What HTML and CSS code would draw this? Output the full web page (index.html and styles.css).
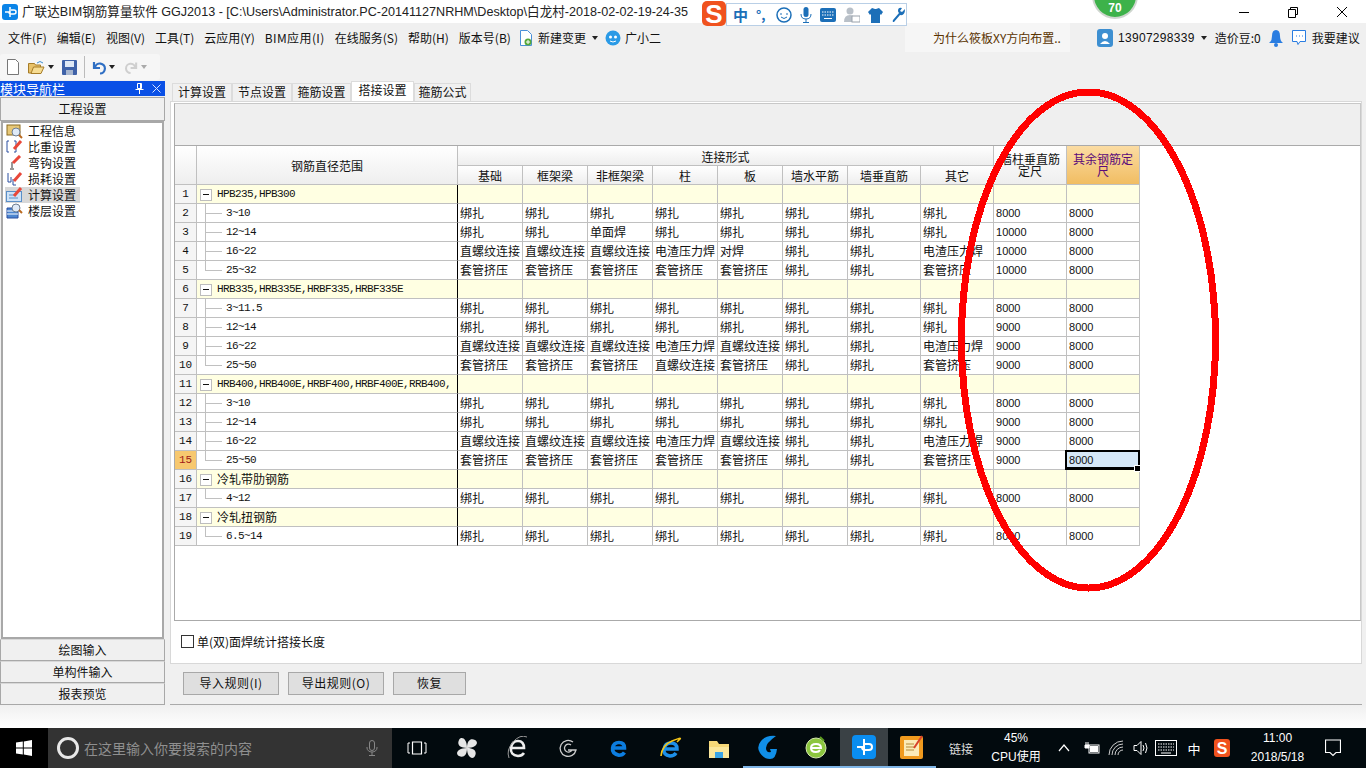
FILE: index.html
```html
<!DOCTYPE html>
<html lang="zh-CN">
<head>
<meta charset="utf-8">
<title>广联达BIM钢筋算量软件 GGJ2013</title>
<link rel="stylesheet" href="styles.css">
</head>
<body>
<div class="titlebar">
  <svg class="app-logo" width="16" height="16" viewBox="0 0 16 16"><rect width="16" height="16" rx="3" fill="#0a84e8"/><path d="M8 3v10M3 8h4a2 2 0 0 0 2 2h3a1.500 1.500 0 0 0 0-4H9" fill="none" stroke="#fff" stroke-width="1.500"/></svg>
  <span class="title-text">广联达BIM钢筋算量软件 GGJ2013 - [C:\Users\Administrator.PC-20141127NRHM\Desktop\白龙村-2018-02-02-19-24-35</span>
  <div class="win-controls">
    <svg width="12" height="12" viewBox="0 0 12 12"><path d="M1 6.500h10" stroke="#000"/></svg>
    <svg width="12" height="12" viewBox="0 0 12 12"><path d="M1.500 3.500h7v8h-7zM3.500 3V1.500h7v7H9" fill="none" stroke="#000"/></svg>
    <svg width="12" height="12" viewBox="0 0 12 12"><path d="M1 1l10 10M11 1L1 11" stroke="#000"/></svg>
  </div>
</div>
<div class="menubar">
  <nav class="menu">
    <span>文件(F)</span><span>编辑(E)</span><span>视图(V)</span><span>工具(T)</span><span>云应用(Y)</span><span class="wide">BIM应用(I)</span><span>在线服务(S)</span><span>帮助(H)</span><span>版本号(B)</span>
  </nav>
  <div class="menu-extra">
    <svg width="14" height="18" viewBox="0 0 14 18"><path d="M1.500 1.500h7l4 4v11h-11z" fill="#fff" stroke="#4a90d9"/><circle cx="9" cy="13" r="3.500" fill="#58a83a"/><path d="M7 13h4M9 11v4" stroke="#fff"/></svg>
    <span>新建变更</span><i class="caret"></i>
    <svg class="guang" width="16" height="18" viewBox="0 0 16 18"><circle cx="8" cy="9" r="7.500" fill="#2a9ae6"/><circle cx="5.500" cy="8" r="1.500" fill="#fff"/><circle cx="10.500" cy="8" r="1.500" fill="#fff"/><path d="M5 12q3 2 6 0" stroke="#fff" fill="none"/></svg>
    <span>广小二</span>
  </div>
  <div class="tip">为什么筱板XY方向布置..</div>
  <div class="account">
    <svg width="16" height="18" viewBox="0 0 16 18"><rect width="16" height="18" rx="3" fill="#3d8fd1"/><circle cx="8" cy="7" r="3" fill="#fff"/><path d="M3 15q5-6 10 0z" fill="#fff"/></svg>
    <span class="phone">13907298339</span><i class="caret"></i>
    <span class="beans">造价豆:0</span>
    <svg width="14" height="18" viewBox="0 0 14 18"><path d="M7 1q4 0 4 6 0 5 3 7H0q3-2 3-7 0-6 4-6z" fill="#2a7de1"/><circle cx="7" cy="16" r="2" fill="#2a7de1"/></svg>
    <svg class="chat" width="16" height="18" viewBox="0 0 16 18"><path d="M1.500 1.500h13v11H9l-2 3-1-3H1.500z" fill="#fff" stroke="#2a7de1"/><path d="M5 7h1M8 7h1M11 7h1" stroke="#2a7de1"/></svg>
    <span>我要建议</span>
  </div>
</div>
<div class="toolbar">
  <div class="tool-group">
    <svg class="t-new" width="14" height="16" viewBox="0 0 14 16"><path d="M1.500.5h8l3 3v12h-11z" fill="#fff" stroke="#777"/></svg>
    <svg class="t-open" width="17" height="15" viewBox="0 0 17 15"><path d="M.5 3.500h6l1 1.500h5v8H.5z" fill="#e8c26a" stroke="#a67c28"/><path d="M3 13.500L5.500 7H16l-3 6.500z" fill="#f6dc92" stroke="#a67c28"/><path d="M9 3q3-3 6 0" stroke="#3d8fd1" fill="none"/></svg>
    <i class="caret dark"></i>
    <svg class="t-save" width="15" height="15" viewBox="0 0 15 15"><rect width="15" height="15" rx="1" fill="#3f62a8"/><rect x="3" y="1" width="9" height="6" fill="#dfe8f5"/><rect x="4" y="10" width="7" height="5" fill="#a7b6cf"/></svg>
    <b class="tool-sep"></b>
    <svg class="t-undo" width="14" height="15" viewBox="0 0 14 15"><path d="M2 2v6h6M3 7.500a5 5 0 1 1 5 6" fill="none" stroke="#2f6fc4" stroke-width="2.200"/></svg>
    <i class="caret dark"></i>
    <svg class="t-redo" width="13" height="15" viewBox="0 0 14 15"><path d="M12 2v6H6M11 7.500a5 5 0 1 0-5 6" fill="none" stroke="#cfcfcf" stroke-width="2.200"/></svg>
    <i class="caret light"></i>
  </div>
</div>
<div class="workspace">
  <aside class="sidebar">
    <div class="nav-head"><span>模块导航栏</span>
      <svg class="pin" width="9" height="11" viewBox="0 0 9 11"><path d="M2.500.5h4v5h-4zM.5 6.500h8M4.500 7v4M5.500 1v4" fill="none" stroke="#fff"/></svg>
      <svg class="close" width="9" height="9" viewBox="0 0 9 9"><path d="M.5.500l8 8M8.500.500l-8 8" stroke="#d9e4ff"/></svg>
    </div>
    <div class="side-btn first">工程设置</div>
    <ul class="side-list">
      <li><svg width="17" height="16" viewBox="0 0 17 16"><rect x="1" y="2" width="13" height="10" fill="#e7c878" stroke="#8a6a20"/><circle cx="10" cy="9" r="4" fill="#dfeaf7" stroke="#6d7d92"/><path d="M13 12l3 3" stroke="#b96a20" stroke-width="2"/></svg>工程信息</li>
      <li><svg width="17" height="16" viewBox="0 0 17 16"><path d="M3 2H1v11h2M8 2h2v11H8" fill="none" stroke="#2a4fa0"/><path d="M8 10l7-8" stroke="#e8473a" stroke-width="3"/></svg>比重设置</li>
      <li><svg width="17" height="16" viewBox="0 0 17 16"><path d="M6 7v6M4 14h4" stroke="#333"/><path d="M7 8l7-7" stroke="#e8473a" stroke-width="3"/></svg>弯钩设置</li>
      <li><svg width="17" height="16" viewBox="0 0 17 16"><path d="M2 2v9h3V6M7 8v6h3" fill="none" stroke="#2a4fa0"/><path d="M8 10l7-8" stroke="#e8473a" stroke-width="3"/></svg>损耗设置</li>
      <li class="active"><svg width="17" height="16" viewBox="0 0 17 16"><rect x=".5" y="4.500" width="15" height="10" fill="#cfe3f7" stroke="#5a8fc8"/><path d="M3 8h6M3 11h9" stroke="#5a8fc8"/><path d="M8 9l7-8" stroke="#e8473a" stroke-width="3"/></svg>计算设置</li>
      <li><svg width="17" height="16" viewBox="0 0 17 16"><path d="M1 5h11v10H1z" fill="#4c86d0" stroke="#2a4fa0"/><path d="M1 8h11M1 11h11" stroke="#fff"/><circle cx="10" cy="5" r="4" fill="#dfeaf7" stroke="#6d7d92"/><path d="M13 7l3 3" stroke="#b96a20" stroke-width="2"/></svg>楼层设置</li>
    </ul>
    <div class="side-btn">绘图输入</div>
    <div class="side-btn">单构件输入</div>
    <div class="side-btn">报表预览</div>
  </aside>
  <main class="main">
    <div class="tabs">
      <span class="tab t1">计算设置</span><span class="tab t1">节点设置</span><span class="tab t2">箍筋设置</span><span class="tab t3 on">搭接设置</span><span class="tab t4">箍筋公式</span>
    </div>
    <section class="panel">
      <div class="box">
        <div class="strip"></div>
        <div class="grid-area">
          <table class="grid">
            <colgroup><col class="c0"><col class="c1"><col class="c2"><col class="c2"><col class="c2"><col class="c2"><col class="c2"><col class="c2"><col class="c3"><col class="c3"><col class="c3"><col class="c3"></colgroup>
            <thead>
              <tr class="h1"><th rowspan="2"></th><th rowspan="2">钢筋直径范围</th><th colspan="8">连接形式</th><th rowspan="2" class="wrap">墙柱垂直筋定尺</th><th rowspan="2" class="wrap hot">其余钢筋定尺</th></tr>
              <tr class="h2"><th>基础</th><th>框架梁</th><th>非框架梁</th><th>柱</th><th>板</th><th>墙水平筋</th><th>墙垂直筋</th><th>其它</th></tr>
            </thead>
            <tbody>
              <tr class="g"><td class="n">1</td><td class="r"><i class="box-minus"></i><span class="lat">HPB235,HPB300</span></td><td></td><td></td><td></td><td></td><td></td><td></td><td></td><td></td><td></td><td></td></tr>
              <tr><td class="n">2</td><td class="r leaf"><span class="lat">3~10</span></td><td>绑扎</td><td>绑扎</td><td>绑扎</td><td>绑扎</td><td>绑扎</td><td>绑扎</td><td>绑扎</td><td>绑扎</td><td class="num">8000</td><td class="num">8000</td></tr>
              <tr><td class="n">3</td><td class="r leaf"><span class="lat">12~14</span></td><td>绑扎</td><td>绑扎</td><td>单面焊</td><td>绑扎</td><td>绑扎</td><td>绑扎</td><td>绑扎</td><td>绑扎</td><td class="num">10000</td><td class="num">8000</td></tr>
              <tr><td class="n">4</td><td class="r leaf"><span class="lat">16~22</span></td><td>直螺纹连接</td><td>直螺纹连接</td><td>直螺纹连接</td><td>电渣压力焊</td><td>对焊</td><td>绑扎</td><td>绑扎</td><td>电渣压力焊</td><td class="num">10000</td><td class="num">8000</td></tr>
              <tr><td class="n">5</td><td class="r leaf last"><span class="lat">25~32</span></td><td>套管挤压</td><td>套管挤压</td><td>套管挤压</td><td>套管挤压</td><td>套管挤压</td><td>绑扎</td><td>绑扎</td><td>套管挤压</td><td class="num">10000</td><td class="num">8000</td></tr>
              <tr class="g"><td class="n">6</td><td class="r"><i class="box-minus"></i><span class="lat">HRB335,HRB335E,HRBF335,HRBF335E</span></td><td></td><td></td><td></td><td></td><td></td><td></td><td></td><td></td><td></td><td></td></tr>
              <tr><td class="n">7</td><td class="r leaf"><span class="lat">3~11.5</span></td><td>绑扎</td><td>绑扎</td><td>绑扎</td><td>绑扎</td><td>绑扎</td><td>绑扎</td><td>绑扎</td><td>绑扎</td><td class="num">8000</td><td class="num">8000</td></tr>
              <tr><td class="n">8</td><td class="r leaf"><span class="lat">12~14</span></td><td>绑扎</td><td>绑扎</td><td>绑扎</td><td>绑扎</td><td>绑扎</td><td>绑扎</td><td>绑扎</td><td>绑扎</td><td class="num">9000</td><td class="num">8000</td></tr>
              <tr><td class="n">9</td><td class="r leaf"><span class="lat">16~22</span></td><td>直螺纹连接</td><td>直螺纹连接</td><td>直螺纹连接</td><td>电渣压力焊</td><td>直螺纹连接</td><td>绑扎</td><td>绑扎</td><td>电渣压力焊</td><td class="num">9000</td><td class="num">8000</td></tr>
              <tr><td class="n">10</td><td class="r leaf last"><span class="lat">25~50</span></td><td>套管挤压</td><td>套管挤压</td><td>套管挤压</td><td>直螺纹连接</td><td>套管挤压</td><td>绑扎</td><td>绑扎</td><td>套管挤压</td><td class="num">9000</td><td class="num">8000</td></tr>
              <tr class="g"><td class="n">11</td><td class="r"><i class="box-minus"></i><span class="lat">HRB400,HRB400E,HRBF400,HRBF400E,RRB400,</span></td><td></td><td></td><td></td><td></td><td></td><td></td><td></td><td></td><td></td><td></td></tr>
              <tr><td class="n">12</td><td class="r leaf"><span class="lat">3~10</span></td><td>绑扎</td><td>绑扎</td><td>绑扎</td><td>绑扎</td><td>绑扎</td><td>绑扎</td><td>绑扎</td><td>绑扎</td><td class="num">8000</td><td class="num">8000</td></tr>
              <tr><td class="n">13</td><td class="r leaf"><span class="lat">12~14</span></td><td>绑扎</td><td>绑扎</td><td>绑扎</td><td>绑扎</td><td>绑扎</td><td>绑扎</td><td>绑扎</td><td>绑扎</td><td class="num">9000</td><td class="num">8000</td></tr>
              <tr><td class="n">14</td><td class="r leaf"><span class="lat">16~22</span></td><td>直螺纹连接</td><td>直螺纹连接</td><td>直螺纹连接</td><td>电渣压力焊</td><td>直螺纹连接</td><td>绑扎</td><td>绑扎</td><td>电渣压力焊</td><td class="num">9000</td><td class="num">8000</td></tr>
              <tr><td class="n cur">15</td><td class="r leaf last"><span class="lat">25~50</span></td><td>套管挤压</td><td>套管挤压</td><td>套管挤压</td><td>套管挤压</td><td>套管挤压</td><td>绑扎</td><td>绑扎</td><td>套管挤压</td><td class="num">9000</td><td class="num sel">8000</td></tr>
              <tr class="g"><td class="n">16</td><td class="r"><i class="box-minus"></i>冷轧带肋钢筋</td><td></td><td></td><td></td><td></td><td></td><td></td><td></td><td></td><td></td><td></td></tr>
              <tr><td class="n">17</td><td class="r leaf last"><span class="lat">4~12</span></td><td>绑扎</td><td>绑扎</td><td>绑扎</td><td>绑扎</td><td>绑扎</td><td>绑扎</td><td>绑扎</td><td>绑扎</td><td class="num">8000</td><td class="num">8000</td></tr>
              <tr class="g"><td class="n">18</td><td class="r"><i class="box-minus"></i>冷轧扭钢筋</td><td></td><td></td><td></td><td></td><td></td><td></td><td></td><td></td><td></td><td></td></tr>
              <tr><td class="n">19</td><td class="r leaf last"><span class="lat">6.5~14</span></td><td>绑扎</td><td>绑扎</td><td>绑扎</td><td>绑扎</td><td>绑扎</td><td>绑扎</td><td>绑扎</td><td>绑扎</td><td class="num">8000</td><td class="num">8000</td></tr>
            </tbody>
          </table>
        </div>
      </div>
      <label class="opt"><i class="check"></i>单(双)面焊统计搭接长度</label>
    </section>
    <div class="btnbar"><span class="btn w96">导入规则(I)</span><span class="btn w96">导出规则(O)</span><span class="btn w72">恢复</span></div>
  </main>
</div>
<div class="spacer"></div>
<footer class="taskbar">
  <div class="start"><svg width="16" height="16" viewBox="0 0 16 16"><path d="M0 2.500L6.800 1.500v6H0zM7.800 1.400L16 0v7.500H7.800zM0 8.500h6.800v6L0 13.500zM7.800 8.500H16V16l-8.200-1.400z" fill="#fff"/></svg></div>
  <div class="search">
    <svg width="24" height="24" viewBox="0 0 24 24"><circle cx="12" cy="12" r="9.500" fill="none" stroke="#e8e8e8" stroke-width="3"/></svg>
    <span>在这里输入你要搜索的内容</span>
    <svg class="mic" width="12" height="16" viewBox="0 0 12 16"><rect x="3.500" y=".5" width="5" height="10" rx="2.500" fill="none" stroke="#888"/><path d="M1 7v1a5 4 0 0 0 10 0V7M6 12v3M3 15.500h6" fill="none" stroke="#888"/></svg>
  </div>
  <div class="apps">
    <div class="app"><svg width="20" height="16" viewBox="0 0 20 16"><path d="M5.500 2h9v12h-9z" fill="none" stroke="#fff" stroke-width="1.200"/><path d="M3 3H1v10h2M17 3h2v10h-2" fill="none" stroke="#fff"/></svg></div>
    <div class="app"><svg width="22" height="22" viewBox="0 0 22 22"><path d="M11 11C3 11 1 7 3 3s8-2 8 8zM11 11c0-8 4-10 8-8s2 8-8 8zM11 11c8 0 10 4 8 8s-8 2-8-8zM11 11c0 8-4 10-8 8s-2-8 8-8z" fill="#e6e6e6"/></svg></div>
    <div class="app"><svg width="22" height="24" viewBox="0 0 22 24"><path d="M3 12h14q0-7-6-7T4 12t7 8q4 0 6-3" fill="none" stroke="#eee" stroke-width="2.600"/><path d="M2 22Q-1 14 6 6t14-5" fill="none" stroke="#999"/></svg></div>
    <div class="app"><svg width="20" height="20" viewBox="0 0 20 20"><path d="M15 4a8 8 0 1 0 3 8h-8M13 7a4 4 0 1 0 1 5" fill="none" stroke="#ccc" stroke-width="1.300"/></svg></div>
    <div class="app"><svg width="20" height="22" viewBox="0 0 22 22"><path d="M3 11h14q0-6-6-6T4 11t7 8q4 0 6-3" fill="none" stroke="#0c7de0" stroke-width="4"/></svg></div>
    <div class="app"><svg width="24" height="24" viewBox="0 0 24 24"><path d="M6 13h13q0-6-6-6t-7 6 6 7q4 0 6-3" fill="none" stroke="#1d8fe8" stroke-width="3.500"/><path d="M3 20Q4 9 14 5t8-2-3 3" fill="none" stroke="#f5c518" stroke-width="1.600"/></svg></div>
    <div class="app"><svg width="22" height="22" viewBox="0 0 22 22"><path d="M1 4h8l2 3h10v14H1z" fill="#f6d878"/><path d="M1 10h20v11H1z" fill="#fbe79c"/><path d="M7 15h8v6H7z" fill="#3ba4e6"/></svg></div>
    <div class="app"><svg width="24" height="26" viewBox="0 0 24 26"><path d="M20 2Q10 1 5 7T4 19t10 6 7-10h-7l1 3q-5 1-5-4T20 2z" fill="#108fe8"/></svg></div>
    <div class="app"><svg width="24" height="26" viewBox="0 0 24 26"><circle cx="12" cy="14" r="10" fill="#8cc63f" stroke="#d7e9b0"/><path d="M7 14h10q0-4-5-4t-5 4 5 4q3 0 4-2" fill="none" stroke="#fff" stroke-width="2"/><path d="M16 3l4 4" stroke="#5c9c1e" stroke-width="2"/></svg></div>
    <div class="app active"><svg width="24" height="24" viewBox="0 0 24 24"><rect width="24" height="24" rx="4" fill="#0a8df0"/><path d="M12 4v16M5 12h5a3 3 0 0 0 3 3h4a2 2 0 0 0 0-6h-4" fill="none" stroke="#fff" stroke-width="2"/></svg></div>
    <div class="app"><svg width="24" height="26" viewBox="0 0 24 26"><rect y="2" width="23" height="23" rx="2" fill="#f09a1e"/><rect x="4" y="6" width="15" height="16" fill="#fbeab8"/><path d="M6 10h8M6 13h8M6 16h8" stroke="#b28a3a"/><path d="M14 14L22 2" stroke="#d8402a" stroke-width="2"/></svg></div>
  </div>
  <div class="tray">
    <span class="tray-item small">链接</span>
    <span class="tray-item cpu">45%<br>CPU使用</span>
    <span class="tray-item"><svg width="12" height="8" viewBox="0 0 12 8"><path d="M1 7l5-6 5 6" fill="none" stroke="#fff" stroke-width="1.200"/></svg></span>
    <span class="tray-item"><svg width="16" height="14" viewBox="0 0 16 14"><rect x="5" y="4" width="10" height="8" fill="none" stroke="#fff"/><rect x="6" y="5" width="8" height="6" fill="#fff"/><path d="M2 1v3M4 1v3M1 4h4v3H1z" stroke="#fff" fill="#fff"/></svg></span>
    <span class="tray-item"><svg width="16" height="16" viewBox="0 0 16 16"><path d="M1 15a14 14 0 0 1 14-14M4 15a11 11 0 0 1 11-11M7 15a8 8 0 0 1 8-8M10 15a5 5 0 0 1 5-5" fill="none" stroke="#ccc"/></svg></span>
    <span class="tray-item"><svg width="16" height="16" viewBox="0 0 16 16"><path d="M1 5.500h3l4-4v13l-4-4H1z" fill="none" stroke="#fff"/><path d="M10 5q2 3 0 6M12.500 3q3 5 0 10" fill="none" stroke="#fff"/></svg></span>
    <span class="tray-item"><svg width="22" height="16" viewBox="0 0 22 16"><rect x=".5" y=".5" width="21" height="15" fill="none" stroke="#fff"/><path d="M3 4h16M3 7h16M3 10h16" stroke="#fff" stroke-dasharray="1.500 1"/><path d="M6 13h10" stroke="#fff"/></svg></span>
    <span class="tray-item zh">中</span>
    <span class="tray-item"><span class="sogou small-s">S</span></span>
    <span class="tray-item clock">11:00<br>2018/5/18</span>
    <span class="tray-item"><svg width="16" height="18" viewBox="0 0 16 18"><path d="M.5 1h15v12.500H11L8 16.500 5 13.500H.5z" fill="none" stroke="#fff" stroke-width="1.200"/></svg></span>
  </div>
</footer>

<div class="ime">
  <span class="sogou big-s">S</span>
  <span class="ime-zh">中</span>
  <span class="ime-p">°,</span>
  <svg width="16" height="16" viewBox="0 0 16 16"><circle cx="8" cy="8" r="7" fill="none" stroke="#1c6fb8" stroke-width="1.500"/><path d="M5 6v2M11 6v2M5 10q3 3 6 0" fill="none" stroke="#1c6fb8"/></svg>
  <svg width="12" height="16" viewBox="0 0 12 16"><rect x="3.500" y="0" width="5" height="10" rx="2.500" fill="#1c6fb8"/><path d="M1 7q0 5 5 5t5-5M6 12v3M3 15.500h6" fill="none" stroke="#1c6fb8"/></svg>
  <svg width="16" height="14" viewBox="0 0 16 14"><rect width="16" height="14" rx="2" fill="#1c6fb8"/><path d="M2 4h12M2 7h12" stroke="#fff" stroke-dasharray="1.500 1"/><path d="M4 10.500h8" stroke="#fff"/></svg>
  <svg width="16" height="16" viewBox="0 0 16 16"><circle cx="6" cy="4" r="3.500" fill="#b9c0c8"/><path d="M0 15q0-7 6-7t6 7z" fill="#b9c0c8"/><rect x="8" y="9" width="8" height="6" fill="#fff" stroke="#9aa2ab"/></svg>
  <svg width="15" height="16" viewBox="0 0 15 16"><path d="M4 1l3 1 1 0 3-1 4 4-2 3-1-1v9H3V7L2 8 0 5z" fill="#1c6fb8"/></svg>
  <svg width="15" height="16" viewBox="0 0 15 16"><path d="M14 2l-3 3-2-1 2-3Q7 0 7 4q0 1 1 2l-6 7q-1 2 1 2l6-7q5 1 5-6z" fill="#1c6fb8"/></svg>
</div>
<div class="score"><span>70</span></div>
<svg class="ring" width="1366" height="768" viewBox="0 0 1366 768"><ellipse cx="1088.500" cy="340" rx="127" ry="248" fill="none" stroke="#ff0000" stroke-width="7" shape-rendering="crispEdges"/></svg>
</body>
</html>
```
FILE: styles.css
```css
* { box-sizing: border-box; }
html, body { margin: 0; padding: 0; }
body {
  position: relative;
  width: 1366px;
  height: 768px;
  overflow: hidden;
  background: #f0f0f0;
  color: #111;
  font: 12px/16px "Noto Sans CJK SC", "Liberation Sans", sans-serif;
  display: flex;
  flex-direction: column;
}
ul { list-style: none; margin: 0; padding: 0; }
i { display: block; font-style: normal; }

.titlebar { height: 23px; flex: none; background: #fff; display: flex; align-items: center; padding-left: 2px; }
.app-logo { flex: none; margin-right: 4px; }
.title-text { font: 12.6px/16px "Liberation Sans", "Noto Sans CJK SC", sans-serif; white-space: nowrap; color: #222; }
.win-controls { margin-left: auto; display: flex; gap: 37px; padding-right: 18px; }

.menubar { height: 29px; flex: none; display: flex; align-items: center; padding-left: 8px; position: relative; }
.menu { display: flex; gap: 10px; width: 511px; flex: none; white-space: nowrap; }
.menu .wide { letter-spacing: .4px; }
.menu-extra { display: flex; align-items: center; width: 386px; flex: none; gap: 5px; }
.caret { width: 0; height: 0; border: 3px solid transparent; border-top: 4px solid #222; border-bottom: 0; margin: 0 1px; }
.caret.dark { border-top-color: #222; }
.caret.light { border-top-color: #aaa; }
.guang { margin-left: 1px; }
.menu-extra span:last-child { margin-left: -1px; }
.tip { width: 165px; flex: none; align-self: stretch; background: #f6f6f6; color: #5a3300; padding-left: 28px; line-height: 29px; white-space: nowrap; }
.account { display: flex; align-items: center; gap: 5px; margin-left: 27px; white-space: nowrap; }
.phone { font: 12px/16px "Liberation Sans", sans-serif; letter-spacing: .3px; }
.beans { margin: 0 3px 0 2px; }
.chat { margin-left: 3px; }

.toolbar { height: 29px; flex: none; padding-top: 2px; }
.tool-group { width: 160px; height: 26px; border-radius: 3px; background: #f6f6f6; display: flex; align-items: center; padding-left: 6px; }
.t-open { margin-left: 8px; }
.t-save { margin-left: 5px; }
.tool-group .caret { margin: 0 3px; }
.tool-sep { width: 1px; height: 22px; background: #bbb; margin: 0 7px; }
.t-redo { margin-left: 7px; }

.workspace { height: 624px; flex: none; display: flex; }
.sidebar { width: 165px; flex: none; display: flex; flex-direction: column; }
.nav-head { height: 15px; flex: none; margin-bottom: 1px; background: #0a50e6; color: #fff; font-size: 13px; line-height: 15px; display: flex; align-items: center; }
.pin { margin-left: 70px; }
.close { margin-left: 8px; }
.side-btn { height: 22px; flex: none; background: #f0f0f0; border: 1px solid #a8a8a8; border-top-color: #d8d8d8; text-align: center; line-height: 20px; }
.side-btn.first { height: 24px; border: 1px solid #a8a8a8; line-height: 22px; }
.side-list { height: 518px; flex: none; margin: 0 1px; background: #fff; border: 2px solid #a8a8a8; padding: 0 2px; }
.side-list li { height: 16px; display: flex; align-items: center; gap: 5px; line-height: 16px; width: 75px; padding-left: 1px; }
.side-list li svg { flex: none; }
.side-list li.active { background: #d8d8d8; }

.main { width: 1196px; margin-left: 5px; flex: none; display: flex; flex-direction: column; }
.tabs { height: 20px; flex: none; display: flex; align-items: flex-end; padding-left: 2px; }
.tab { height: 18px; background: #f0f0f0; border: 1px solid #dcdcdc; border-bottom: 0; text-align: center; line-height: 16px; }
.t1 { width: 60px; }
.t2 { width: 59px; }
.t3 { width: 63px; }
.t4 { width: 57px; }
.tab.on { height: 20px; background: #fff; line-height: 16px; }
.panel { height: 563px; width: 1192px; flex: none; background: #fff; border: 1px solid #d8d8d8; padding: 1px 0 0 3px; display: flex; flex-direction: column; }
.box { width: 1187px; height: 518px; flex: none; border: 1px solid #c8c8c8; display: flex; flex-direction: column; border-bottom-color: #aaa; border-left-color: #aaa; }
.strip { height: 42px; flex: none; background: #efefef; border-bottom: 1px solid #aaa; }
.grid-area { flex: 1; min-height: 0; overflow: hidden; background: #fff; }

.grid { border-collapse: separate; border-spacing: 0; table-layout: fixed; width: 965px; }
.c0 { width: 22px; }
.c1 { width: 261px; }
.c2 { width: 65px; }
.c3 { width: 73px; }
.grid th, .grid td {
  padding: 0;
  border-right: 1px solid #c0c0c0;
  border-bottom: 1px solid #c0c0c0;
  overflow: hidden;
  white-space: nowrap;
}
.grid th { font-weight: 400; background: linear-gradient(#fff, #eee); text-align: center; line-height: 16px; padding-top: 2px; }
.h1 th { height: 20px; }
.h2 th { height: 19px; }
.grid th.wrap { white-space: normal; line-height: 12px; padding: 0 5px; }
.grid th.hot { background: linear-gradient(#fbdca3, #f1bd62); color: #5a0a7a; }
.grid td { height: 19px; line-height: 18px; padding-left: 2px; background: #fff; }
.grid td:nth-child(2) { border-right-color: #000; position: relative; }
.grid td.n { padding: 0; text-align: center; background: #f5f5f5; font: 11px/18px "Liberation Mono", monospace; }
.grid td.n.cur { background: #f7c86f; color: #a01818; }
.grid td.num { font: 11px/18px "Liberation Sans", sans-serif; }
.grid .g td { background: #ffffe2; }
.grid .g td.n { background: #f5f5f5; }
.grid td.r { padding-left: 20px; }
.grid td.leaf { padding-left: 29px; }
.lat { display: block; font: 11px/18px "Liberation Mono", monospace; letter-spacing: -.6px; }
.box-minus { position: absolute; left: 3px; top: 4px; width: 12px; height: 12px; border: 1px solid #bdbdbd; background: #fff; }
.box-minus::before { content: ""; position: absolute; left: 2px; right: 2px; top: 4px; height: 1px; background: #111; }
.leaf::before { content: ""; position: absolute; left: 8px; top: 0; bottom: -1px; width: 1px; background: #c0c0c0; }
.leaf.last::before { bottom: 9px; }
.leaf::after { content: ""; position: absolute; left: 8px; top: 9px; width: 17px; height: 1px; background: #c0c0c0; }
.grid td.sel { position: relative; background: #d6e8f8; overflow: visible; }
.grid td.sel::before { content: ""; position: absolute; left: -2px; top: -1px; right: -1px; bottom: -1px; border: 2px solid #000; border-bottom-width: 3px; }
.grid td.sel::after { content: ""; position: absolute; right: -2px; bottom: -3px; width: 5px; height: 5px; background: #000; border: 1px solid #fff; }

.opt { height: 43px; flex: none; display: flex; align-items: center; gap: 3px; padding: 0 0 2px 7px; }
.check { width: 13px; height: 13px; background: #fff; border: 1px solid #333; }
.btnbar { height: 41px; flex: none; display: flex; align-items: flex-start; gap: 9px; padding: 8px 0 0 13px; width: 1192px; border-bottom: 1px solid #aaa; background: #f0f0f0; }
.btn { height: 23px; background: #dfdfdf; border: 1px solid #a8a8a8; text-align: center; line-height: 20px; letter-spacing: .5px; }
.w96 { width: 96px; }
.w72 { width: 73px; }

.spacer { height: 23px; flex: none; background: linear-gradient(#f0f0f0, #fff); }

.taskbar { height: 40px; flex: none; display: flex; background: #020a0e; color: #fff; }
.start { width: 48px; flex: none; background: #000; display: flex; align-items: center; justify-content: center; }
.search { width: 344px; flex: none; background: #333; display: flex; align-items: center; padding-left: 8px; gap: 4px; color: #8f8f8f; font-size: 14px; }
.mic { margin-left: 110px; }
.apps { flex: none; display: grid; grid-template-columns: 49px 51px 51px 50px 52px 49px 49px 49px 48px 48px 48px; }
.app { display: flex; align-items: center; justify-content: center; height: 40px; }
.app:nth-child(8), .app:nth-child(9), .app:nth-child(10), .app:nth-child(11) { border-bottom: 2px solid #7fb5e6; }
.app.active { background: #3a4145; }
.tray { flex: none; display: grid; grid-template-columns: 50px 60px 35px 22px 26px 24px 26px 30px 26px 85px 26px; }
.tray-item { display: flex; align-items: center; justify-content: center; text-align: center; height: 40px; line-height: 19px; white-space: nowrap; }
.tray-item.small { color: #ddd; }
.cpu { font-family: "Liberation Sans", "Noto Sans CJK SC", sans-serif; }
.clock { font-family: "Liberation Sans", sans-serif; }
.zh { font-size: 13px; }

.sogou { display: flex; align-items: center; justify-content: center; color: #fff; background: #f0521e; font-family: "Liberation Sans", sans-serif; font-weight: 700; }
.small-s { width: 16px; height: 18px; border-radius: 3px; font-size: 16px; }
.big-s { position: absolute; left: -25px; top: -3px; width: 24px; height: 25px; border-radius: 5px; font-size: 26px; }

.ime { position: absolute; left: 726px; top: 3px; width: 181px; height: 23px; background: #fff; border: 1px solid #b9cfe6; display: flex; align-items: center; gap: 8px; padding-left: 6px; color: #1c6fb8; }
.ime-zh { font-size: 15px; font-weight: 700; line-height: 16px; }
.ime-p { font-weight: 700; font-size: 13px; line-height: 14px; width: 12px; }
.score { position: absolute; left: 1092px; top: -28px; width: 46px; height: 47px; border-radius: 50%; background: #3db24a; border: 2px solid #cfd6cf; color: #fff; font-weight: 700; text-align: center; display: flex; align-items: flex-end; justify-content: center; padding-bottom: 1px; font-family: "Liberation Sans", sans-serif; }
.ring { position: absolute; left: 0; top: 0; pointer-events: none; }
```
